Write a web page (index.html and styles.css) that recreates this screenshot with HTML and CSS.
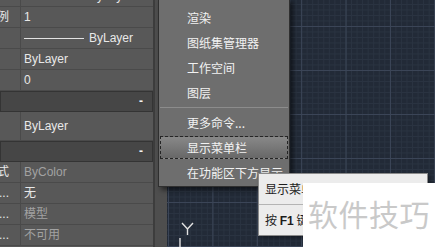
FILE: index.html
```html
<!doctype html>
<html>
<head>
    <meta charset="utf-8">
    <link rel="stylesheet" href="styles.css">
</head>
<body>
    <div class="app">
        <div class="panel">
            <div class="rows">
                <div class="row"><span class="lbl"></span><span class="val"><i class="ln"></i>ByLayer</span></div>
                <div class="row"><span class="lbl">例</span><span class="val">1</span></div>
                <div class="row"><span class="lbl"></span><span class="val"><i class="ln"></i>ByLayer</span></div>
                <div class="row"><span class="lbl"></span><span class="val">ByLayer</span></div>
                <div class="row"><span class="lbl"></span><span class="val">0</span></div>
                <div class="head"><span>-</span></div>
                <div class="row tall"><span class="lbl"></span><span class="val">ByLayer</span></div>
                <div class="head"><span>-</span></div>
                <div class="row"><span class="lbl">式</span><span class="val dim">ByColor</span></div>
                <div class="row"><span class="lbl">...</span><span class="val">无</span></div>
                <div class="row"><span class="lbl">...</span><span class="val dim">模型</span></div>
                <div class="row"><span class="lbl">...</span><span class="val dim">不可用</span></div>
            </div>
        </div>
        <div class="strip"></div>
        <div class="canvas">
            <svg class="ucs" width="30" height="30" viewBox="0 0 30 30">
                <path d="M5 5 L10.5 11 L16 5 M10.5 11 L10.5 17 M3 20 L3 30" fill="none" stroke="#e2e2e2" stroke-width="1.4"/>
            </svg>
        </div>
    </div>

    <div class="menu">
        <div class="item">渲染</div>
        <div class="item">图纸集管理器</div>
        <div class="item">工作空间</div>
        <div class="item">图层</div>
        <div class="sep"></div>
        <div class="item">更多命令...</div>
        <div class="item on">显示菜单栏</div>
        <div class="item">在功能区下方显示</div>
    </div>

    <div class="tip">
        <div class="tip-row">显示菜单栏</div>
        <div class="tip-sep"></div>
        <div class="tip-row">按 <b>F1</b> 键获取更多帮助</div>
    </div>

    <div class="mark">软件技巧</div>
</body>
</html>
```

FILE: styles.css
```css
* {
    margin: 0;
    padding: 0;
    box-sizing: border-box;
}
body {
    width: 435px;
    height: 247px;
    overflow: hidden;
    position: relative;
    font-family: "Liberation Sans", "Noto Sans CJK SC", sans-serif;
    font-size: 12px;
    background: #222a37;
}
.app {
    display: flex;
    height: 247px;
}

/* properties panel */
.panel {
    width: 153px;
    flex-shrink: 0;
    overflow: hidden;
    background: #585858;
}
.rows {
    margin-top: -14px;
}
.row {
    display: flex;
    height: 21px;
    border-bottom: 1px solid #4a4a4a;
    line-height: 20px;
    color: #e8e8e8;
}
.row.tall {
    height: 29px;
    line-height: 28px;
}
.lbl {
    width: 21px;
    flex-shrink: 0;
    border-right: 1px solid #4a4a4a;
    padding-right: 11px;
    text-align: right;
    white-space: nowrap;
    overflow: hidden;
    direction: rtl;
}
.val {
    padding-left: 3px;
    white-space: nowrap;
}
.val.dim {
    color: #a2a2a2;
}
.ln {
    display: inline-block;
    width: 60px;
    height: 1px;
    background: #e2e2e2;
    vertical-align: middle;
    margin-right: 5px;
}
.head {
    height: 21px;
    background: #464646;
    border: 1px solid #343434;
    display: flex;
    justify-content: flex-end;
    padding-right: 9px;
    color: #f2f2f2;
    font-weight: bold;
    line-height: 19px;
}
.strip {
    width: 14px;
    flex-shrink: 0;
    background: #4e4e4e;
    border-left: 2px solid #3d3d3d;
}

/* drawing area */
.canvas {
    flex: 1;
    position: relative;
    background-color: #222a37;
    background-image:
        linear-gradient(to right, #3b4557 1px, transparent 1px),
        linear-gradient(to bottom, #3b4557 1px, transparent 1px),
        linear-gradient(to right, #2a3341 1px, transparent 1px),
        linear-gradient(to bottom, #2a3341 1px, transparent 1px);
    background-size: 44.4px 44px, 44.4px 44px, 5.55px 5.5px, 5.55px 5.5px;
    background-position: 1px 26px;
}
.ucs {
    position: absolute;
    left: 10px;
    top: 218px;
}

/* context menu */
.menu {
    position: absolute;
    left: 158px;
    top: -1px;
    width: 132px;
    background: #6e6e6e;
    border: 1px solid #2f2f2f;
    padding: 5px 0 1px;
    box-shadow: 3px 3px 5px rgba(0, 0, 0, 0.55);
    color: #f2f2f2;
    font-family: "Noto Sans CJK SC", sans-serif;
}
.item {
    height: 25px;
    line-height: 25px;
    padding-left: 28px;
    white-space: nowrap;
}
.item.on {
    height: 23px;
    line-height: 21px;
    margin: 1px 1px;
    padding-left: 26px;
    border: 1px dashed #252525;
    background: linear-gradient(#888888, #686868);
}
.sep {
    height: 1px;
    margin: 2px 1px;
    background: #8c8c8c;
}

/* tooltip */
.tip {
    position: absolute;
    left: 258px;
    top: 173px;
    width: 170px;
    background: #ececec;
    border: 1px solid #8a8a8a;
    box-shadow: 2px 2px 4px rgba(0, 0, 0, 0.4);
    color: #1c1c1c;
    font-family: "Noto Sans CJK SC", sans-serif;
}
.tip-row {
    height: 30px;
    line-height: 30px;
    padding-left: 6px;
    white-space: nowrap;
}
.tip-row b {
    font-family: "Liberation Sans", sans-serif;
}
.tip-sep {
    height: 1px;
    background: #b4b4b4;
}

/* watermark */
.mark {
    position: absolute;
    left: 303px;
    top: 183px;
    right: 0;
    bottom: 0;
    background: #ffffff;
    padding: 15px 0 0 5px;
    font-family: "Noto Sans CJK SC", sans-serif;
    font-size: 30px;
    line-height: 30px;
    letter-spacing: 0.5px;
    color: #c9c9c9;
    white-space: nowrap;
}
```
